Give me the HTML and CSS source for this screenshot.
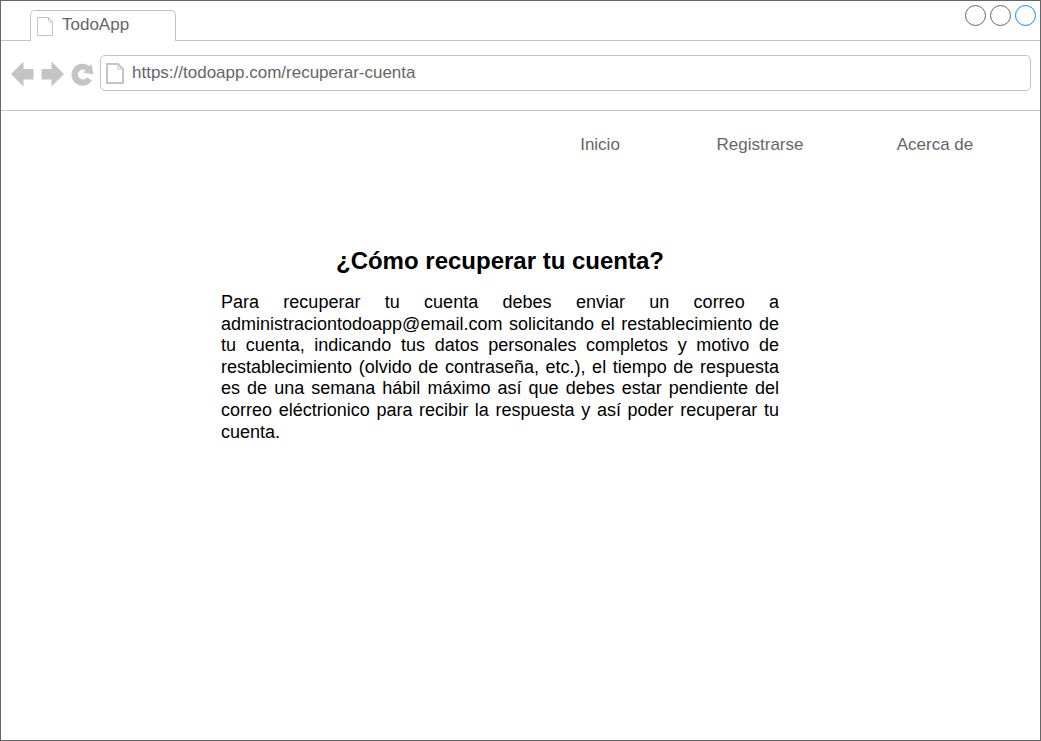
FILE: index.html
```html
<!DOCTYPE html>
<html lang="es">
<head>
<meta charset="utf-8">
<title>TodoApp</title>
<link rel="stylesheet" href="styles.css">
</head>
<body>
<div class="window">
  <header class="tab-strip">
    <div class="tab">
      <svg class="tab-icon" width="17" height="20" viewBox="0 0 17 20" aria-hidden="true"><path d="M.5 .5H11.5L15.5 5V18.500H.5ZM11.500 .5V3.500L12.500 5H15.500"/></svg>
      <span>TodoApp</span>
    </div>
    <div class="controls">
      <button class="control" type="button" aria-label="Minimizar"></button>
      <button class="control" type="button" aria-label="Maximizar"></button>
      <button class="control control-close" type="button" aria-label="Cerrar"></button>
    </div>
  </header>
  <div class="toolbar">
    <div class="tools">
      <button class="tool" type="button" aria-label="Atrás"><svg width="24" height="26" viewBox="0 0 24 26"><path d="M0 13 12.500 .5V8H22.500V18.500H12.500V25.500Z"/></svg></button>
      <button class="tool" type="button" aria-label="Adelante"><svg width="24" height="26" viewBox="0 0 24 26"><path d="M23 13 10.500 .5V8H.5V18.500H10.500V25.500Z"/></svg></button>
      <button class="tool" type="button" aria-label="Recargar"><svg width="24" height="26" viewBox="0 0 24 26"><path d="M18.300 5 20.500 3 22.500 13.300 12 11.500 14.800 9.300A5 5 0 1 0 16 16.500L20.800 19.500A11 11 0 1 1 18.300 5Z"/></svg></button>
    </div>
    <label class="address">
      <svg class="page-icon" width="18" height="21" viewBox="0 0 18 21" aria-hidden="true"><path d="M1 1H12L17 6V20H1Z"/><path class="fold" d="M12 1V6H17"/></svg>
      <input class="url" type="text" aria-label="Dirección" value="https://todoapp.com/recuperar-cuenta">
    </label>
  </div>
  <nav class="nav">
    <a href="#inicio">Inicio</a>
    <a href="#registrarse">Registrarse</a>
    <a href="#acerca">Acerca de</a>
  </nav>
  <main class="content">
    <h1 class="title">¿Cómo recuperar tu cuenta?</h1>
    <p class="text">Para recuperar tu cuenta debes enviar un correo a administraciontodoapp@email.com solicitando el restablecimiento de tu cuenta, indicando tus datos personales completos y motivo de restablecimiento (olvido de contraseña, etc.), el tiempo de respuesta es de una semana hábil máximo así que debes estar pendiente del correo eléctrionico para recibir la respuesta y así poder recuperar tu cuenta.</p>
  </main>
</div>
</body>
</html>
```

FILE: styles.css
```css
* { box-sizing: border-box; }
body {
  margin: 0;
  background: #fff;
  color: #000;
  font-family: "Liberation Sans", Arial, sans-serif;
}
.window {
  min-height: 100vh;
  border: 1px solid #666;
}
.tab-strip {
  display: flex;
  justify-content: space-between;
  align-items: flex-start;
  height: 40px;
  padding: 4px 4px 0 29px;
  border-bottom: 1px solid #c4c4c4;
}
.tab {
  display: flex;
  gap: 8px;
  width: 146px;
  height: 31px;
  margin-top: 5px;
  padding: 4px 6px 0;
  border: 1px solid #c4c4c4;
  border-bottom: 0;
  border-radius: 5px 5px 0 0;
  background: #fff;
  color: #666;
  font-size: 17px;
  line-height: 20px;
}
.tab-icon {
  margin-top: 2px;
  fill: none;
  stroke: #c4c4c4;
}
.controls {
  display: flex;
  gap: 4px;
}
.control {
  width: 21px;
  height: 21px;
  padding: 0;
  border: 1px solid #666;
  border-radius: 50%;
  background: none;
}
.control-close { border-color: #008cff; }
.toolbar {
  display: flex;
  align-items: flex-start;
  gap: 5px;
  padding: 14px 9px 19px 10px;
  border-bottom: 1px solid #c4c4c4;
}
.tools {
  display: flex;
  gap: 6px;
  padding-top: 6px;
}
.tool {
  flex: none;
  width: 24px;
  height: 26px;
  padding: 0;
  border: 0;
  background: none;
}
.tool svg {
  display: block;
  fill: #c4c4c4;
}
.address {
  display: flex;
  flex: 1;
  gap: 8px;
  height: 36px;
  padding: 0 5px;
  border: 1px solid #c4c4c4;
  border-radius: 5px;
}
.page-icon {
  flex: none;
  margin-top: 7px;
  fill: none;
  stroke: #c4c4c4;
  stroke-width: 2;
}
.fold { stroke-width: 1; }
.url {
  flex: 1;
  min-width: 0;
  height: 34px;
  padding: 0;
  border: 0;
  outline: 0;
  background: none;
  color: #666;
  font: 17px "Liberation Sans", Arial, sans-serif;
}
.nav {
  display: grid;
  grid-template-columns: 160px 160px 190px;
  justify-content: end;
  padding: 24px 10px 0 0;
  text-align: center;
}
.nav a {
  color: #666;
  font-size: 17px;
  line-height: 20px;
  text-decoration: none;
}
.content {
  max-width: 778px;
  padding: 92px 0 0 220px;
}
.title {
  margin: 0 0 17px;
  font-size: 24px;
  line-height: 28px;
  text-align: center;
}
.text {
  margin: 0;
  font-size: 18px;
  line-height: 1.2;
  text-align: justify;
}
```
